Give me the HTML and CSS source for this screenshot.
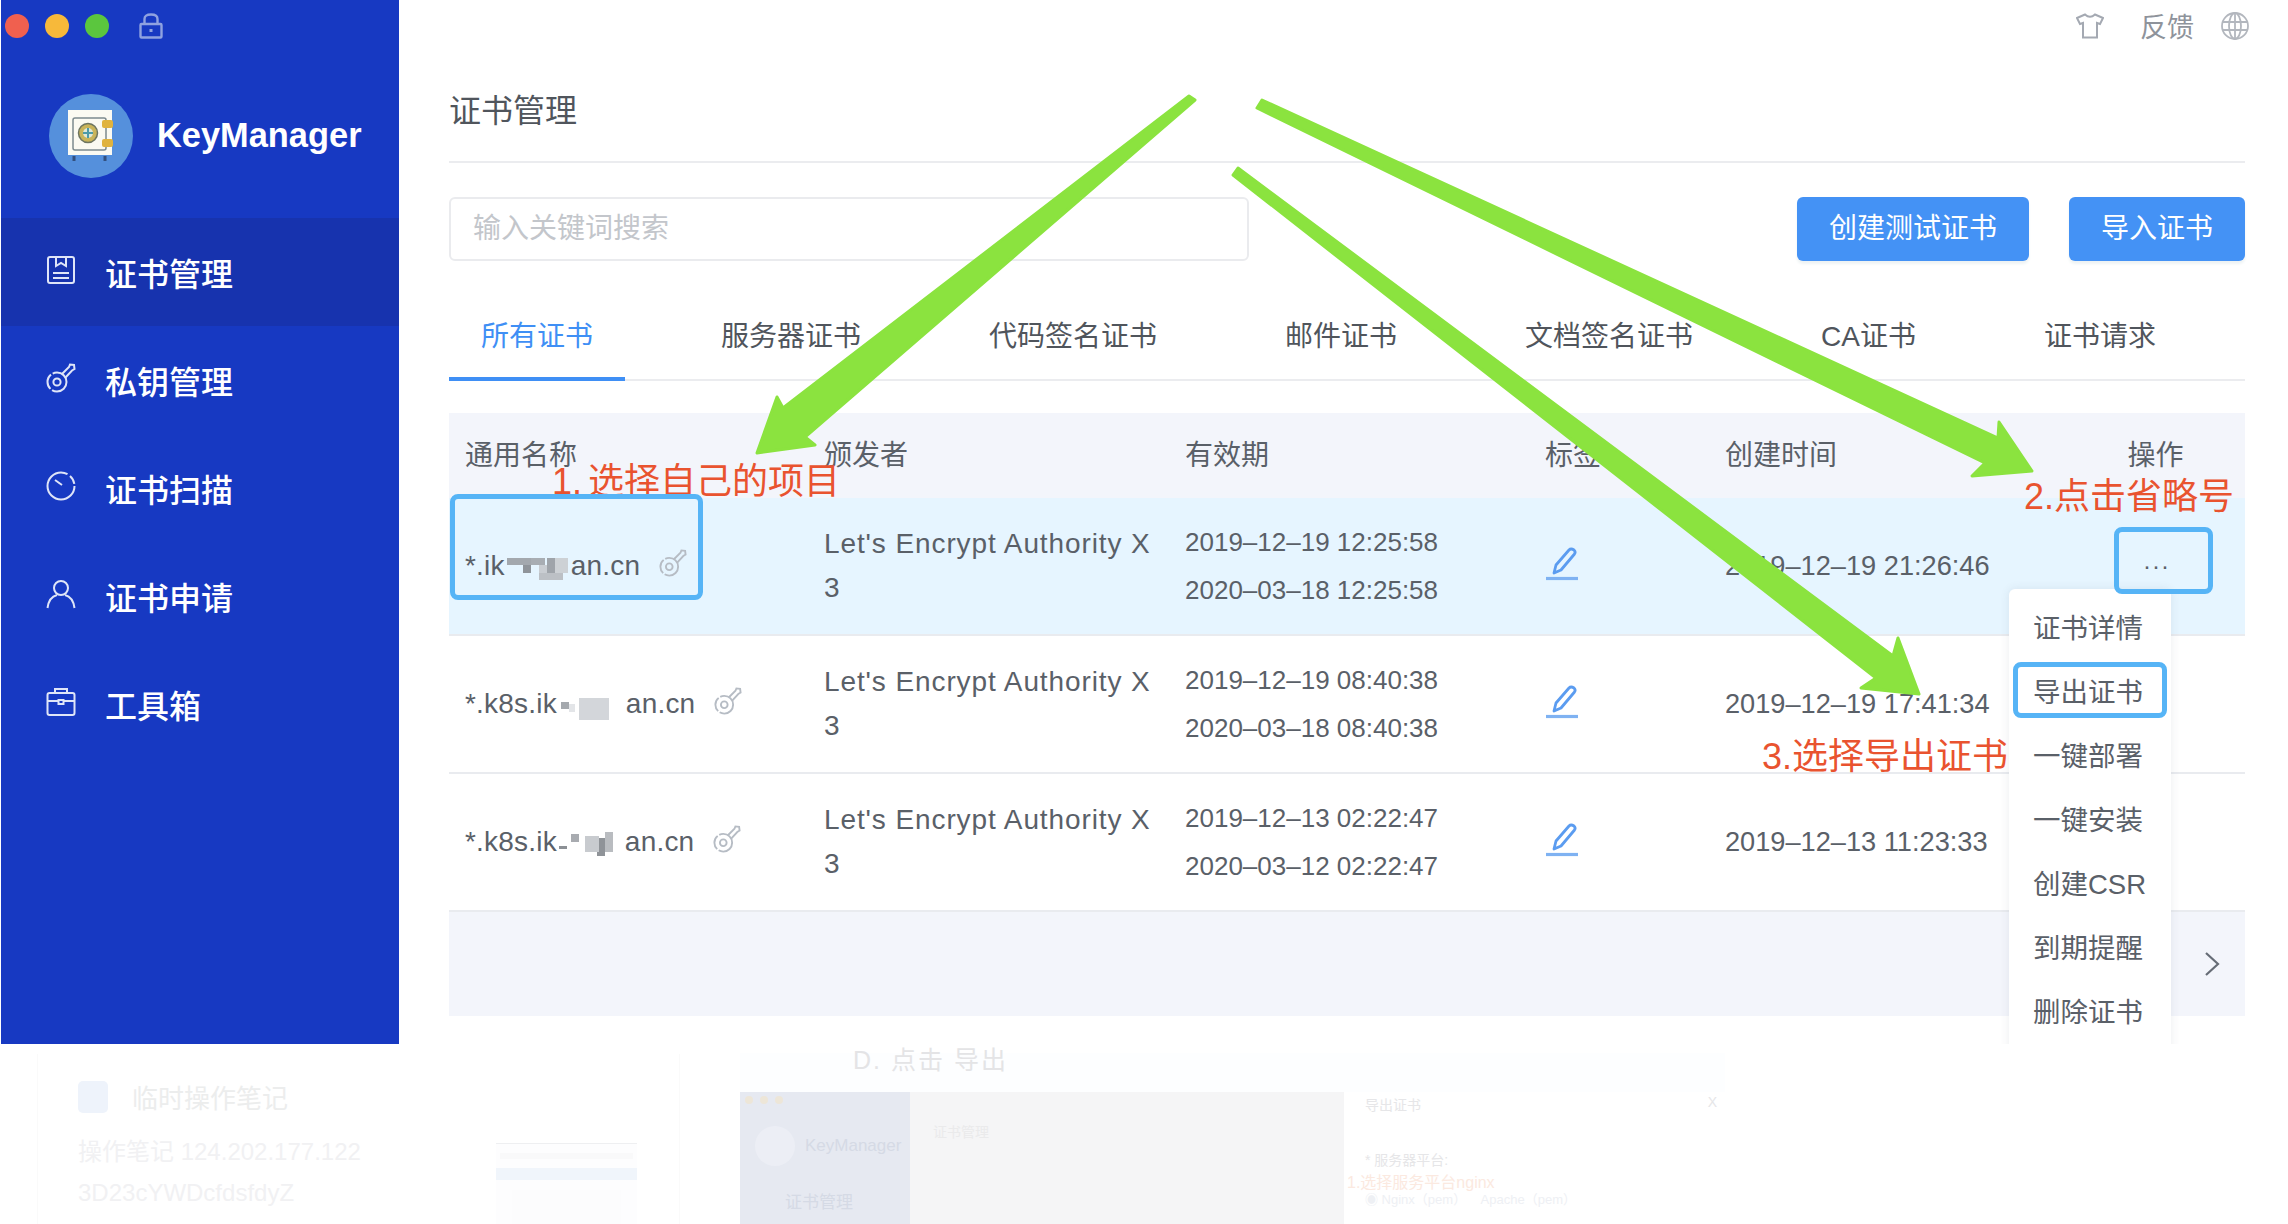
FILE: index.html
```html
<!DOCTYPE html>
<html lang="zh">
<head>
<meta charset="utf-8">
<title>KeyManager 证书管理</title>
<link rel="stylesheet" href="styles.css">
</head>
<body>
<svg class="defs" width="0" height="0">
  <symbol id="key" viewBox="0 0 30 30"><g fill="none" stroke="currentColor" stroke-width="2"><circle cx="11" cy="19" r="9.500" stroke-dasharray="20 2 16 2"/><circle cx="11" cy="19" r="3.600"/><path d="M16 11 L23 4 L24 1.500 L28 2 L28.500 6 L26 7.500 L19.500 14.500"/></g></symbol>
  <symbol id="pen" viewBox="0 0 34 36"><g fill="none" stroke="#5b9cf0" stroke-width="2.800" stroke-linejoin="round"><path d="M9 27 L11 19 L24 4 Q26 2 29 4 Q31 6 29.500 8 L16 24 Z"/></g><path d="M1 32.500 H33" stroke="#7fb2f2" stroke-width="3.200"/></symbol>
</svg>
<div class="app">
  <aside class="sidebar">
    <div class="lights">
      <i class="light red"></i><i class="light yellow"></i><i class="light green"></i>
      <svg class="lock" width="24" height="26" viewBox="0 0 24 26"><g fill="none" stroke="#8fa2e0" stroke-width="2.400"><rect x="1.500" y="11" width="21" height="13.500" rx="1"/><path d="M5.500 11 V6 Q5.500 1.500 12 1.500 Q18.500 1.500 18.500 6 V11"/></g><rect x="10.500" y="16" width="3" height="3" fill="#8fa2e0"/></svg>
    </div>
    <div class="brand">
      <span class="logo">
        <svg width="50" height="56" viewBox="0 0 50 56">
          <rect x="2" y="2" width="44" height="45" fill="#fbfaf2"/>
          <rect x="7" y="10" width="33" height="32" rx="2" fill="none" stroke="#7d8a8e" stroke-width="1.500"/>
          <circle cx="22" cy="25" r="9.500" fill="#c9b45a" stroke="#6d7560" stroke-width="1.500"/>
          <circle cx="22" cy="25" r="5" fill="#dfe8d9"/>
          <path d="M22 20 V30 M17 25 H27" stroke="#4d9aa8" stroke-width="2"/>
          <rect x="36" y="12" width="11" height="8" rx="2" fill="#e0b33e"/>
          <rect x="36" y="31" width="11" height="8" rx="2" fill="#e0b33e"/>
          <path d="M8 48 V53 M39 48 V53" stroke="#33507f" stroke-width="3"/>
        </svg>
      </span>
      <span class="brand-name">KeyManager</span>
    </div>
    <nav class="menu">
      <a class="menu-item active">
        <svg class="menu-icon" viewBox="0 0 30 30" fill="none" stroke="currentColor" stroke-width="2"><rect x="2" y="2" width="26" height="26" rx="2"/><path d="M10 2 V11 L15 8 L20 11 V2 M7 18 H23 M7 23 H23"/></svg>
        <span>证书管理</span>
      </a>
      <a class="menu-item">
        <svg class="menu-icon"><use href="#key"/></svg>
        <span>私钥管理</span>
      </a>
      <a class="menu-item">
        <svg class="menu-icon" viewBox="0 0 30 30" fill="none" stroke="currentColor" stroke-width="2"><circle cx="15" cy="15" r="13.500" stroke-dasharray="70 3 9 3"/><path d="M9 9 L16 14"/></svg>
        <span>证书扫描</span>
      </a>
      <a class="menu-item">
        <svg class="menu-icon" viewBox="0 0 30 30" fill="none" stroke="currentColor" stroke-width="2"><circle cx="15" cy="9" r="7"/><path d="M1.500 29 Q3 18 11 16 M19 16 Q27 18 28.500 29"/></svg>
        <span>证书申请</span>
      </a>
      <a class="menu-item">
        <svg class="menu-icon" viewBox="0 0 30 30" fill="none" stroke="currentColor" stroke-width="2"><rect x="1.500" y="6" width="27" height="22" rx="2"/><path d="M9 6 V2 H21 V6 M1.500 14 H12 M18 14 H28.500"/><rect x="12.500" y="13" width="5" height="4"/></svg>
        <span>工具箱</span>
      </a>
    </nav>
  </aside>

  <main class="main">
    <div class="topbar">
      <svg class="top-icon" width="28" height="26" viewBox="0 0 28 26" fill="none" stroke="#a4a9b2" stroke-width="2"><path d="M9 1.500 Q14 6 19 1.500 L27 5 L24 11 L21 10 V24.500 H7 V10 L4 11 L1 5 Z"/></svg>
      <span class="feedback">反馈</span>
      <svg class="top-icon" width="28" height="28" viewBox="0 0 28 28" fill="none" stroke="#b3b7be" stroke-width="1.800"><circle cx="14" cy="14" r="13"/><ellipse cx="14" cy="14" rx="6" ry="13"/><path d="M14 1 V27 M1.500 10 H26.500 M1.500 18 H26.500"/></svg>
    </div>
    <h1 class="page-title">证书管理</h1>
    <div class="toolbar">
      <div class="search">输入关键词搜索</div>
      <div class="buttons">
        <button class="btn">创建测试证书</button>
        <button class="btn">导入证书</button>
      </div>
    </div>
    <div class="tabs">
      <span class="tab current">所有证书</span>
      <span class="tab">服务器证书</span>
      <span class="tab">代码签名证书</span>
      <span class="tab">邮件证书</span>
      <span class="tab">文档签名证书</span>
      <span class="tab">CA证书</span>
      <span class="tab">证书请求</span>
    </div>
    <div class="table">
      <div class="row head">
        <span>通用名称</span><span>颁发者</span><span>有效期</span><span>标签</span><span>创建时间</span><span class="ops">操作</span>
      </div>
      <div class="row selected">
        <span class="name">*.ik<i class="mosaic m1"></i>an.cn<svg class="key-icon"><use href="#key"/></svg></span>
        <span class="issuer">Let's Encrypt Authority X<br>3</span>
        <span class="dates">2019–12–19 12:25:58<br>2020–03–18 12:25:58</span>
        <svg class="pen"><use href="#pen"/></svg>
        <span class="created">2019–12–19 21:26:46</span>
        <span class="ops dots">···</span>
      </div>
      <div class="row">
        <span class="name">*.k8s.ik<i class="mosaic m2"></i>an.cn<svg class="key-icon"><use href="#key"/></svg></span>
        <span class="issuer">Let's Encrypt Authority X<br>3</span>
        <span class="dates">2019–12–19 08:40:38<br>2020–03–18 08:40:38</span>
        <svg class="pen"><use href="#pen"/></svg>
        <span class="created">2019–12–19 17:41:34</span>
        <span class="ops"></span>
      </div>
      <div class="row">
        <span class="name">*.k8s.ik<i class="mosaic m3"></i>an.cn<svg class="key-icon"><use href="#key"/></svg></span>
        <span class="issuer">Let's Encrypt Authority X<br>3</span>
        <span class="dates">2019–12–13 02:22:47<br>2020–03–12 02:22:47</span>
        <svg class="pen"><use href="#pen"/></svg>
        <span class="created">2019–12–13 11:23:33</span>
        <span class="ops"></span>
      </div>
      <div class="table-foot">
        <svg width="16" height="26" viewBox="0 0 16 26" fill="none" stroke="#666c76" stroke-width="2.200"><path d="M2 2 L14 13 L2 24"/></svg>
      </div>
    </div>
  </main>

  <ul class="dropdown">
    <li>证书详情</li><li>导出证书</li><li>一键部署</li><li>一键安装</li><li>创建CSR</li><li>到期提醒</li><li>删除证书</li>
  </ul>
</div>

<section class="faded">
  <div class="note">
    <div class="note-title"><i class="note-icon"></i><span>临时操作笔记</span></div>
    <p>操作笔记 124.202.177.122</p>
    <p>3D23cYWDcfdsfdyZ</p>
    <div class="thumb"><i class="thumb-line"></i><i class="thumb-band"></i><i class="thumb-card"></i></div>
  </div>
  <div class="article">
    <div class="article-head">D. 点击 导出</div>
    <div class="shot">
      <div class="shot-side">
        <div class="shot-lights"><i></i><i></i><i></i></div>
        <div class="shot-brand"><i></i><span>KeyManager</span></div>
        <div class="shot-menu">证书管理</div>
      </div>
      <div class="shot-main"><span>证书管理</span></div>
      <div class="shot-modal">
        <div class="modal-head"><span>导出证书</span><span>X</span></div>
        <div class="modal-label">* 服务器平台:</div>
        <div class="modal-note">1.选择服务平台nginx</div>
        <div class="modal-radio">◉ Nginx（pem）&nbsp;&nbsp;&nbsp;&nbsp;Apache（pem）</div>
      </div>
    </div>
  </div>
</section>

<svg class="arrows" width="2288" height="1224" viewBox="0 0 2288 1224">
  <g fill="#8be33f" stroke="#8be33f" stroke-width="3" stroke-linejoin="round">
    <polygon points="1195,100 805,437 815,445 757,453 777,397 783,408 1189,96"/>
    <polygon points="1262,100 1998,438 1999,422 2032,471 1972,476 1985,463 1257,108"/>
    <polygon points="1238,168 1893,656 1898,638 1919,694 1861,688 1876,678 1233,175"/>
  </g>
</svg>
<span class="callout c1">1. 选择自己的项目</span>
<span class="callout c2">2.点击省略号</span>
<span class="callout c3">3.选择导出证书</span>
<i class="box b1"></i>
<i class="box b2"></i>
<i class="box b3"></i>
</body>
</html>
```

FILE: styles.css
```css
* { box-sizing: border-box; }
html, body { margin: 0; padding: 0; background: #fff; }
body {
  position: relative;
  width: 2288px;
  height: 1224px;
  overflow: hidden;
  font-family: "Liberation Sans", "Noto Sans CJK SC", sans-serif;
  color: #5a6068;
}
.defs { position: absolute; }

.app { position: relative; display: flex; height: 1044px; overflow: hidden; padding-left: 1px; }

/* sidebar */
.sidebar { width: 398px; flex: none; background: #1739c2; color: #fff; }
.lights { display: flex; align-items: center; height: 52px; padding-left: 4px; }
.light { width: 24px; height: 24px; border-radius: 50%; margin-right: 16px; }
.red { background: #f0604f; }
.yellow { background: #f7b93a; }
.green { background: #5bc63e; }
.lock { margin-left: 14px; }
.brand { display: flex; align-items: center; height: 166px; padding: 0 0 0 48px; }
.logo { width: 84px; height: 84px; border-radius: 50%; background: #5590dc; display: flex; align-items: center; justify-content: center; margin-top: 2px; margin-right: 24px; }
.brand-name { font-size: 34.400px; font-weight: 700; margin-top: 1px; }
.menu { display: flex; flex-direction: column; }
.menu-item { display: flex; align-items: center; height: 108px; padding-left: 45px; font-size: 32px; font-weight: 500; font-family: "Noto Sans CJK SC", sans-serif; }
.menu-item.active { background: #1733ae; }
.menu-icon { width: 30px; height: 30px; margin-right: 29px; margin-top: -4px; color: #dfe5f8; }

/* main */
.main { flex: 1; padding: 0 43px 0 50px; display: flex; flex-direction: column; min-width: 0; }
.topbar { display: flex; align-items: center; justify-content: flex-end; height: 52px; margin-right: -4px; }
.feedback { font-size: 27px; color: #8e939b; margin: -2px 27px 0 36px; font-family: "Noto Sans CJK SC", sans-serif; }
.page-title { margin: 0; height: 111px; padding-top: 31px; border-bottom: 2px solid #ebecef; font-size: 32px; line-height: 50px; font-weight: 400; color: #50555c; font-family: "Noto Sans CJK SC", sans-serif; }
.toolbar { display: flex; justify-content: space-between; margin-top: 34px; height: 64px; }
.search { width: 800px; height: 64px; border: 2px solid #eaebee; border-radius: 6px; padding-left: 22px; font-size: 28px; line-height: 55px; color: #c3c6cb; font-family: "Noto Sans CJK SC", sans-serif; }
.buttons { display: flex; gap: 40px; }
.btn { height: 64px; border: 0; border-radius: 6px; background: #4492f5; color: #fff; font-size: 28px; line-height: 58px; padding: 0 32px 6px; box-shadow: 0 3px 3px #eef3f4; font-family: "Noto Sans CJK SC", sans-serif; }

.tabs { display: flex; gap: 64px; height: 120px; border-bottom: 2px solid #ebecef; }
.tab { padding: 56px 32px 0; height: 120px; line-height: 40px; font-size: 28px; color: #50555c; font-family: "Liberation Sans", "Noto Sans CJK SC", sans-serif; }
.tab.current { color: #3f8ff5; border-bottom: 4px solid #3f8ff5; }

/* table */
.table { margin-top: 32px; font-size: 28px; }
.row { display: grid; grid-template-columns: 359px 361px 360px 180px 391px 1fr; align-items: center; height: 138px; border-bottom: 2px solid #e9ebef; }
.row > * { margin-left: 16px; }
.row.head { height: 85px; background: #f3f5fb; border-bottom: 0; color: #5a6068; font-family: "Noto Sans CJK SC", sans-serif; font-size: 28px; padding-bottom: 6px; }
.row.selected { background: #e6f5ff; }
.ops { text-align: center; margin-left: 0 !important; margin-right: 34px; }
.dots { font-size: 24px; letter-spacing: 1px; padding-left: 2px; }
.name { display: flex; align-items: center; font-size: 28px; letter-spacing: 0.2px; white-space: nowrap; }
.issuer { line-height: 44px; font-size: 28px; letter-spacing: 0.9px; margin-top: -1px; }
.dates { font-size: 26px; line-height: 48px; margin-top: 0; }
.created { font-size: 27.200px; }
.pen { width: 34px; height: 36px; margin-top: -4px; }
.key-icon { width: 28px; height: 28px; margin-left: 19px; margin-top: -6px; color: #b6bcc4; }
.mosaic { display: inline-block; height: 28px; margin: 8px 0 0; }
.m1 { width: 66px; background:
  linear-gradient(#a3a8ae, #a3a8ae) 2px 2px / 24px 7px no-repeat,
  linear-gradient(#8f949a, #8f949a) 18px 9px / 8px 8px no-repeat,
  linear-gradient(#a8adb3, #a8adb3) 26px 2px / 14px 7px no-repeat,
  linear-gradient(#c9cdd2, #c9cdd2) 34px 9px / 8px 8px no-repeat,
  linear-gradient(#9fa4aa, #9fa4aa) 42px 2px / 8px 15px no-repeat,
  linear-gradient(#bcc0c5, #bcc0c5) 34px 17px / 24px 7px no-repeat,
  linear-gradient(#cdd1d5, #cdd1d5) 50px 2px / 13px 15px no-repeat; }
.m2 { width: 69px; background:
  linear-gradient(#a5a9ae, #a5a9ae) 4px 8px / 8px 7px no-repeat,
  linear-gradient(#d3d6da, #d3d6da) 22px 4px / 30px 22px no-repeat,
  linear-gradient(#b9bdc2, #b9bdc2) 36px 6px / 8px 10px no-repeat,
  linear-gradient(#e3e5e8, #e3e5e8) 12px 10px / 6px 8px no-repeat; }
.m3 { width: 68px; background:
  linear-gradient(#8c9095, #8c9095) 2px 14px / 8px 3px no-repeat,
  linear-gradient(#a8abb0, #a8abb0) 14px 2px / 8px 8px no-repeat,
  linear-gradient(#c8cbcf, #c8cbcf) 28px 4px / 14px 16px no-repeat,
  linear-gradient(#8f9398, #8f9398) 40px 6px / 8px 18px no-repeat,
  linear-gradient(#b9bcc0, #b9bcc0) 48px 0 / 8px 20px no-repeat; }
.table-foot { display: flex; align-items: center; justify-content: flex-end; height: 104px; background: #f3f5fb; padding: 0 25px 0 0; }

/* dropdown over the table */
.dropdown { position: absolute; left: 2009px; top: 589px; width: 162px; height: 480px; margin: 0; padding: 8px 0 0 24px; list-style: none; background: #fff; border-radius: 6px; box-shadow: 0 0 10px rgba(60, 70, 90, 0.1); font-size: 27.500px; color: #5a6068; font-family: "Liberation Sans", "Noto Sans CJK SC", sans-serif; }
.dropdown li { height: 64px; line-height: 64px; white-space: nowrap; }

/* faint page content below the app */
.faded { display: flex; height: 180px; overflow: hidden; }
.note { position: relative; width: 643px; margin: 10px 0 0 37px; padding: 24px 0 0 40px; border-left: 1px solid #fafafa; border-right: 1px solid #fafafa; color: #f0f0f2; font-size: 24px; }
.note-title { display: flex; align-items: center; gap: 24px; font-size: 26px; color: #eceded; margin-bottom: 22px; }
.note-icon { width: 30px; height: 32px; border-radius: 5px; background: #eef3fb; }
.note p { margin: 0 0 11px; line-height: 30px; color: #f1f1f3; }
.thumb { position: absolute; left: 458px; top: 89px; width: 141px; height: 90px; border-top: 1px solid #eeeff1; background: #fdfdfe; }
.thumb-line { display: block; height: 6px; margin: 9px 4px; background: #f9f9fa; }
.thumb-band { display: block; height: 12px; margin-top: 2px; background: #f0f5fb; }
.thumb-card { display: block; height: 50px; margin: 10px 16px; background: #fcfcfd; }
.article { flex: 1; margin: 9px 0 0 60px; width: 1000px; }
.article-head { height: 39px; padding-left: 113px; width: 985px; background: #fdfeff; font-size: 25px; line-height: 14px; letter-spacing: 2px; color: #e4e4e6; }
.shot { display: flex; height: 132px; overflow: hidden; }
.shot-side { position: relative; width: 170px; background: #e6e9f1; color: #d5dae5; font-size: 17px; }
.shot-lights { display: flex; gap: 7px; padding: 4px 0 0 5px; height: 26px; }
.shot-lights i { width: 8px; height: 8px; border-radius: 50%; background: #ede6d8; }
.shot-brand { display: flex; align-items: center; gap: 10px; padding-left: 15px; height: 56px; }
.shot-brand i { width: 40px; height: 40px; border-radius: 50%; background: #eceef5; }
.shot-menu { padding: 14px 0 0 45px; }
.shot-main { width: 434px; background: #f5f5f6; padding: 29px 0 0 23px; font-size: 14px; color: #eaeaeb; }
.shot-modal { width: 381px; background: #fff; padding: 2px 0 0 21px; color: #e6e6e8; font-size: 14px; }
.modal-head { display: flex; justify-content: space-between; padding-right: 8px; height: 55px; }
.modal-label { height: 20px; }
.modal-note { margin-left: -18px; color: #fbe9e0; font-size: 16px; height: 20px; }
.modal-radio { font-size: 13px; color: #eef0f4; }

/* annotations drawn over the screenshot */
.arrows { position: absolute; left: 0; top: 0; pointer-events: none; }
.callout { position: absolute; font-size: 36px; line-height: 44px; color: #e9532f; white-space: nowrap; font-family: "Liberation Sans", "Noto Sans CJK SC", sans-serif; }
.c1 { left: 552px; top: 460px; word-spacing: -4px; }
.c2 { left: 2024px; top: 475px; }
.c3 { left: 1762px; top: 735px; }
.box { position: absolute; border: 5px solid #56b4f6; border-radius: 8px; }
.b1 { left: 450px; top: 494px; width: 253px; height: 106px; }
.b2 { left: 2114px; top: 527px; width: 99px; height: 67px; }
.b3 { left: 2013px; top: 662px; width: 154px; height: 56px; }
```
